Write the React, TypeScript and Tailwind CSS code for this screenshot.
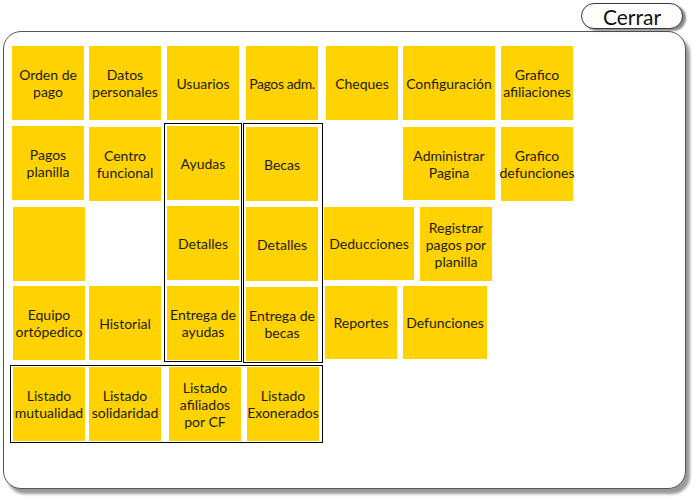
import React from "react";

type TileProps = { label?: string; className?: string };

// yellow menu tile; size defaults to 72x74
function Tile({ label = "", className = "" }: TileProps) {
  return (
    <div
      className={`flex shrink-0 items-center justify-center bg-[#FFD200] text-center text-[14px] leading-[17px] text-[#1c1c1c] ${className}`}
    >
      <span className="whitespace-pre-line">{label}</span>
    </div>
  );
}

const T = "w-[72px] h-[74px]";

export default function App() {
  return (
    <div
      className="relative h-[500px] w-[700px] overflow-hidden bg-white"
      style={{ fontFamily: "Lato, 'Open Sans', sans-serif" }}
    >
      <div className="flex justify-end pr-[17px] pt-[3px]">
        <button className="h-[26px] w-[102px] rounded-[13px] border border-[#3a3a3a] bg-white text-[21px] leading-none text-[#111] shadow-[3px_2px_2px_rgba(0,0,0,0.45)]">
          Cerrar
        </button>
      </div>

      <div className="ml-[3px] mt-[2px] h-[458px] w-[683px] rounded-[18px] border border-[#555] bg-white pl-[8px] pt-[14px] shadow-[4px_5px_3px_rgba(0,0,0,0.4)]">
        {/* row 1 */}
        <div className="flex items-start">
          <Tile className={T} label={"Orden de\npago"} />
          <Tile className={`${T} ml-[5px]`} label={"Datos\npersonales"} />
          <Tile className={`${T} ml-[6px]`} label="Usuarios" />
          <Tile className={`${T} ml-[7px] tracking-[-0.4px]`} label="Pagos adm." />
          <Tile className={`${T} ml-[8px]`} label="Cheques" />
          <Tile className="ml-[5px] h-[74px] w-[92px]" label="Configuración" />
          <Tile className={`${T} ml-[6px]`} label={"Grafico\nafiliaciones"} />
        </div>

        {/* middle block */}
        <div className="mt-[3px] flex items-start">
          <div className="flex w-[152px] flex-col pt-[3px]">
            <div className="flex items-start">
              <Tile className={T} label={"Pagos\nplanilla"} />
              <Tile className={`${T} ml-[5px] mt-[1px]`} label={"Centro\nfuncional"} />
            </div>
            <Tile className={`${T} ml-[1px] mt-[6px]`} />
            <div className="mt-[5px] flex items-start">
              <Tile className={`${T} ml-[1px]`} label={"Equipo\nortópedico"} />
              <Tile className={`${T} ml-[4px]`} label="Historial" />
            </div>
          </div>

          <div className="flex flex-col gap-[6px] border border-black px-[2px] pb-[1px] pt-[2px]">
            <Tile className={T} label="Ayudas" />
            <Tile className={T} label="Detalles" />
            <Tile className={T} label={"Entrega de\nayudas"} />
          </div>

          <div className="ml-[1px] flex flex-col gap-[6px] border border-black pb-[1px] pl-[2px] pr-[4px] pt-[3px]">
            <Tile className={T} label="Becas" />
            <Tile className={T} label="Detalles" />
            <Tile className={T} label={"Entrega de\nbecas"} />
          </div>

          <div className="ml-[1px] flex flex-col pt-[4px]">
            <div className="flex items-start">
              <Tile className="ml-[79px] h-[73px] w-[92px]" label={"Administrar\nPagina"} />
              <Tile className={`${T} ml-[6px]`} label={"Grafico\ndefunciones"} />
            </div>
            <div className="mt-[6px] flex items-start">
              <Tile className="h-[73px] w-[90px]" label="Deducciones" />
              <Tile className={`${T} ml-[6px]`} label={"Registrar\npagos por\nplanilla"} />
            </div>
            <div className="mt-[5px] flex items-start">
              <Tile className="ml-[1px] h-[73px] w-[72px]" label="Reportes" />
              <Tile className="ml-[6px] h-[73px] w-[84px]" label="Defunciones" />
            </div>
          </div>
        </div>

        {/* row 5 */}
        <div className="ml-[-2px] mt-[2px] flex w-[313px] items-start border border-black px-[2px] py-[1px]">
          <Tile className={T} label={"Listado\nmutualidad"} />
          <Tile className={`${T} ml-[4px]`} label={"Listado\nsolidaridad"} />
          <Tile className={`${T} ml-[8px]`} label={"Listado\nafiliados\npor CF"} />
          <Tile className={`${T} ml-[6px]`} label={"Listado\nExonerados"} />
        </div>
      </div>
    </div>
  );
}
